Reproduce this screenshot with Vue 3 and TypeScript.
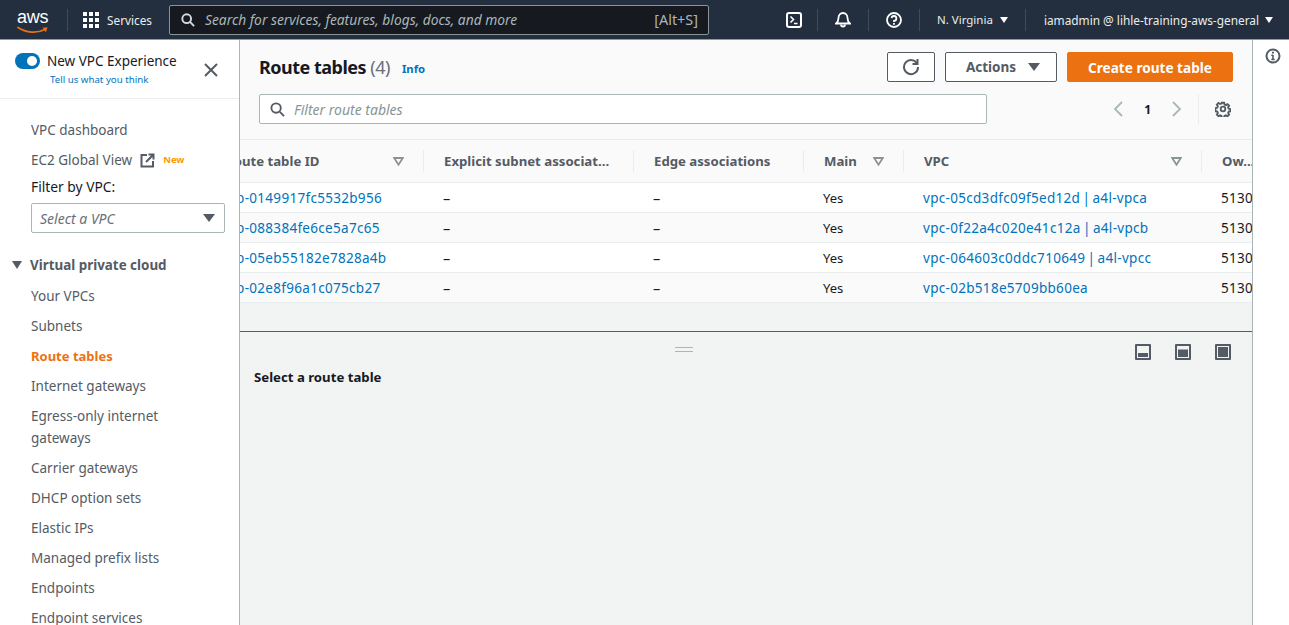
<script setup lang="ts">
const navTop = ['Your VPCs', 'Subnets', 'Route tables', 'Internet gateways', 'Egress-only internet gateways', 'Carrier gateways', 'DHCP option sets', 'Elastic IPs', 'Managed prefix lists', 'Endpoints', 'Endpoint services']
const columns = [
  { label: 'Route table ID', filter: true },
  { label: 'Explicit subnet associat...', filter: false },
  { label: 'Edge associations', filter: false },
  { label: 'Main', filter: true },
  { label: 'VPC', filter: true },
  { label: 'Ow...', filter: false },
]
const rows = [
  { id: 'rtb-0149917fc5532b956', vpc: 'vpc-05cd3dfc09f5ed12d | a4l-vpca' },
  { id: 'rtb-088384fe6ce5a7c65', vpc: 'vpc-0f22a4c020e41c12a | a4l-vpcb' },
  { id: 'rtb-05eb55182e7828a4b', vpc: 'vpc-064603c0ddc710649 | a4l-vpcc' },
  { id: 'rtb-02e8f96a1c075cb27', vpc: 'vpc-02b518e5709bb60ea' },
]
</script>

<template>
  <div class="app">
    <header class="topbar">
      <div class="logo">
        <span class="aws">aws</span>
        <svg class="smile" width="32" height="9" viewBox="0 0 32 9"><path d="M1 1.500C9 7 20 7.500 28 3.500" fill="none" stroke="#ec7211" stroke-width="1.800" stroke-linecap="round"/><path d="M25.500 1.800l5-.6-1.500 5z" fill="#ec7211"/></svg>
      </div>
      <span class="hsep first"></span>
      <svg class="grid-ic" width="16" height="16" viewBox="0 0 16 16" fill="#fff"><rect x="0" y="0" width="4" height="4"/><rect x="6" y="0" width="4" height="4"/><rect x="12" y="0" width="4" height="4"/><rect x="0" y="6" width="4" height="4"/><rect x="6" y="6" width="4" height="4"/><rect x="12" y="6" width="4" height="4"/><rect x="0" y="12" width="4" height="4"/><rect x="6" y="12" width="4" height="4"/><rect x="12" y="12" width="4" height="4"/></svg>
      <span class="services">Services</span>
      <div class="search">
        <svg width="14" height="14" viewBox="0 0 16 16" fill="none" stroke="#d5dbdb" stroke-width="2.200"><circle cx="6.500" cy="6.500" r="5"/><path d="M10.500 10.500L15 15"/></svg>
        <span class="search-text">Search for services, features, blogs, docs, and more</span>
        <span class="search-key">[Alt+S]</span>
      </div>
      <div class="top-right">
        <svg class="tic t1" width="16" height="16" viewBox="0 0 16 16" fill="none" stroke="#fff" stroke-width="2"><rect x="1" y="1" width="14" height="14" rx="2"/><path d="M4.500 4.500L7.500 7.500L4.500 10.500M8 11.500h3.500" stroke-width="1.600"/></svg>
        <span class="hsep"></span>
        <svg class="tic" width="16" height="17" viewBox="0 0 16 17" fill="none" stroke="#fff" stroke-width="1.800"><path d="M1 12.500c1.800-1.400 2.500-2.800 2.500-5.500 0-3 2-5 4.500-5s4.500 2 4.500 5c0 2.700.7 4.100 2.500 5.500z"/><path d="M6 13.500a2 2 0 0 0 4 0"/></svg>
        <span class="hsep"></span>
        <svg class="tic" width="16" height="16" viewBox="0 0 16 16" fill="none" stroke="#fff" stroke-width="1.800"><circle cx="8" cy="8" r="7"/><path d="M5.600 6.200A2.400 2.400 0 1 1 8 8.800v1.200"/><path d="M8 11v1.800"/></svg>
        <span class="hsep"></span>
        <span class="region">N. Virginia</span>
        <span class="caret c-region"></span>
        <span class="hsep"></span>
        <span class="account">iamadmin @ lihle-training-aws-general</span>
        <span class="caret"></span>
      </div>
    </header>

    <div class="body">
      <aside class="side">
        <div class="exp">
          <div class="exp-main">
            <div class="exp-line">
              <span class="toggle"><span class="knob"></span></span>
              <span class="exp-title">New VPC Experience</span>
            </div>
            <a class="exp-link">Tell us what you think</a>
          </div>
          <svg class="close" width="14" height="14" viewBox="0 0 14 14" stroke="#545b64" stroke-width="2"><path d="M1 1l12 12M13 1L1 13"/></svg>
        </div>
        <nav class="nav">
          <div class="item">VPC dashboard</div>
          <div class="item">
            EC2 Global View
            <svg class="ext" width="15" height="15" viewBox="0 0 15 15" fill="none" stroke="#545b64" stroke-width="2"><path d="M7 2H1.500V13.500H13V8"/><path d="M6 9L13 2M8.500 1.500h5v5"/></svg>
            <span class="new">New</span>
          </div>
          <div class="filter-label">Filter by VPC:</div>
          <div class="select">
            <span>Select a VPC</span>
            <span class="select-caret"></span>
          </div>
          <div class="section">
            <span class="sec-caret"></span>
            Virtual private cloud
          </div>
          <div v-for="n in navTop" :key="n" class="item" :class="{ active: n === 'Route tables', wrap: n.length > 25 }">{{ n }}</div>
        </nav>
      </aside>

      <main class="main">
        <section class="top">
          <div class="title-row">
            <h1>Route tables <span class="count">(4)</span></h1>
            <a class="info">Info</a>
            <div class="actions">
              <button class="btn refresh">
                <svg width="18" height="18" viewBox="0 0 18 18" fill="none" stroke="#545b64" stroke-width="2"><path d="M15 5.500A7 7 0 1 0 16 9"/><path d="M15.500 1v5h-5"/></svg>
              </button>
              <button class="btn act">Actions <span class="act-caret"></span></button>
              <button class="btn primary">Create route table</button>
            </div>
          </div>
          <div class="filter-row">
            <div class="filter">
              <svg width="15" height="15" viewBox="0 0 16 16" fill="none" stroke="#545b64" stroke-width="2"><circle cx="6.500" cy="6.500" r="5"/><path d="M10.500 10.500L15 15"/></svg>
              <span>Filter route tables</span>
            </div>
            <div class="pager">
              <svg width="10" height="16" viewBox="0 0 10 16" fill="none" stroke="#aab7b8" stroke-width="1.800"><path d="M9 1L2 8l7 7"/></svg>
              <span class="pnum">1</span>
              <svg width="10" height="16" viewBox="0 0 10 16" fill="none" stroke="#aab7b8" stroke-width="1.800"><path d="M1 1l7 7-7 7"/></svg>
              <span class="psep"></span>
              <svg width="16" height="16" viewBox="0 0 16 16" fill="none" stroke="#545b64" stroke-width="2.100"><path d="M6.700 1h2.600l.4 2 1.500.7 1.800-1.100 1.800 1.800-1.100 1.800.7 1.500 2 .4v2.400l-2 .4-.7 1.500 1.100 1.800-1.800 1.800-1.800-1.100-1.500.7-.4 2H6.700l-.4-2-1.500-.7-1.800 1.100-1.800-1.800 1.100-1.800-.7-1.500-2-.4V6.900l2-.4.7-1.500-1.100-1.800 1.800-1.800 1.800 1.100 1.500-.7z" transform="translate(.8 .8) scale(.9)"/><circle cx="8" cy="8" r="2.300" stroke-width="1.800"/></svg>
            </div>
          </div>
        </section>

        <div class="table-clip">
          <table class="tbl">
            <colgroup>
              <col class="c1" /><col class="c2" /><col class="c3" /><col class="c4" /><col class="c5" /><col class="c6" />
            </colgroup>
            <thead>
              <tr>
                <th v-for="c in columns" :key="c.label">
                  <div class="th-in">
                    <span>{{ c.label }}</span>
                    <svg v-if="c.filter" class="tf" width="11" height="9" viewBox="0 0 11 9" fill="none" stroke="#879596" stroke-width="1.800"><path d="M1.200 1h8.600L5.500 7.700z"/></svg>
                  </div>
                </th>
              </tr>
            </thead>
            <tbody>
              <tr v-for="r in rows" :key="r.id">
                <td class="link">{{ r.id }}</td>
                <td class="dash">–</td>
                <td class="dash">–</td>
                <td>Yes</td>
                <td class="link">{{ r.vpc }}</td>
                <td class="num">513000000000</td>
              </tr>
            </tbody>
          </table>
        </div>

        <section class="lower">
          <div class="handle"></div>
          <div class="split-ics">
            <svg width="16" height="16" viewBox="0 0 16 16"><rect width="16" height="16" rx="1" fill="#545b64"/><rect x="2" y="2" width="12" height="12" fill="#f2f3f3"/><rect x="3" y="9" width="10" height="4" fill="#545b64"/></svg>
            <svg width="16" height="16" viewBox="0 0 16 16"><rect width="16" height="16" rx="1" fill="#545b64"/><rect x="2" y="2" width="12" height="12" fill="#f2f3f3"/><rect x="3" y="5.500" width="10" height="7.500" fill="#545b64"/></svg>
            <svg width="16" height="16" viewBox="0 0 16 16"><rect width="16" height="16" rx="1" fill="#545b64"/><rect x="2" y="2" width="12" height="12" fill="#f2f3f3"/><rect x="3" y="3" width="10" height="10" fill="#545b64"/></svg>
          </div>
          <div class="select-msg">Select a route table</div>
        </section>
      </main>

      <aside class="tools">
        <svg width="16" height="16" viewBox="0 0 16 16" fill="none" stroke="#545b64" stroke-width="2"><circle cx="8" cy="8" r="6.500"/><path d="M8 7v4.500M6.300 7.300H8M6.300 11.500h3.400" stroke-width="1.600"/><path d="M8 3.800v1.800"/></svg>
      </aside>
    </div>
  </div>
</template>

<style>
html, body { margin: 0; overflow: hidden; }
</style>

<style scoped>
.app { width: 1289px; height: 625px; overflow: hidden; display: flex; flex-direction: column; font-family: "Noto Sans", sans-serif; font-size: 13px; color: #16191f; }
.topbar { height: 39px; background: #232f3e; border-bottom: 1px solid #8d9aa8; flex: none; display: flex; align-items: center; padding-left: 17px; color: #fff; box-sizing: content-box; }
.logo { width: 50px; height: 30px; position: relative; flex: none; }
.aws { position: absolute; left: 0; top: 2px; font: 400 18px/20px "Liberation Sans", sans-serif; letter-spacing: -.2px; color: #fff; }
.smile { position: absolute; left: 0; top: 21px; }
.hsep { width: 1px; height: 22px; background: #414b58; flex: none; }
.grid-ic { margin-left: 15px; flex: none; }
.services { margin-left: 8px; font-size: 11.800px; width: 62px; color: #eaeded; flex: none; }
.search { height: 28px; border: 1px solid #879596; border-radius: 2px; background: #16191f; display: flex; align-items: center; padding: 0 10px 0 11px; box-sizing: content-box; width: 517px; color: #aab7b8; flex: none; }
.search svg { flex: none; }
.search-text { margin-left: 10px; font-style: italic; font-size: 13.800px; flex: 1; white-space: nowrap; }
.search-key { font-size: 14.400px; }
.top-right { margin-left: auto; display: flex; align-items: center; padding-right: 16px; }
.top-right .hsep { margin: 0 17px; }
.tic { flex: none; }
.tic.t1 { margin-right: -2px; }
.region, .account { white-space: nowrap; color: #eaeded; }
.region { font-size: 11.500px; }
.account { font-size: 11.850px; margin-left: 1px; }
.caret { width: 0; height: 0; border-left: 4.500px solid transparent; border-right: 4.500px solid transparent; border-top: 6px solid #fff; margin-left: 6px; }
.caret.c-region { margin-left: 7px; }

.body { flex: 1; display: flex; min-height: 0; }
.side { width: 239px; flex: none; background: #fff; border-right: 1px solid #aab7b8; overflow: hidden; box-sizing: content-box; position: relative; z-index: 2; }
.exp { height: 58px; border-bottom: 1px solid #eaeded; padding: 0 21px 0 15px; display: flex; align-items: center; justify-content: space-between; }
.exp-line { display: flex; align-items: center; gap: 7px; }
.toggle { width: 25px; height: 16px; border-radius: 8px; background: #0073bb; position: relative; display: block; }
.knob { position: absolute; right: 3px; top: 3px; width: 10px; height: 10px; background: #fff; border-radius: 50%; }
.exp-title { font-size: 13.500px; line-height: 18px; }
.exp-link { display: block; font-size: 9.700px; line-height: 14px; margin: 3px 0 0 35px; color: #0073bb; }
.close { flex: none; margin-top: 1px; }
.nav { padding: 16px 14px 0 31px; color: #545b64; font-size: 13.500px; }
.item { min-height: 30px; line-height: 30px; white-space: nowrap; display: flex; align-items: center; }
.item.wrap { white-space: normal; line-height: 22px; padding: 4px 0; width: 140px; }
.item.active { color: #ec7211; font-weight: 700; font-size: 13px; }
.ext { margin-left: 8px; }
.new { font-size: 9.500px; font-weight: 700; color: #ff9900; margin-left: 8px; }
.filter-label { color: #16191f; line-height: 20px; margin-top: 2px; font-size: 13.800px; }
.select { margin-top: 6px; height: 28px; border: 1px solid #aab7b8; border-radius: 2px; display: flex; align-items: center; justify-content: space-between; padding: 0 9px 0 8px; font-style: italic; font-size: 14px; color: #687078; width: 175px; box-sizing: content-box; }
.select-caret { width: 0; height: 0; border-left: 6px solid transparent; border-right: 6px solid transparent; border-top: 8px solid #545b64; }
.section { margin: 22px 0 6px -19px; font-weight: 700; display: flex; align-items: center; line-height: 20px; gap: 8px; font-size: 13.400px; }
.sec-caret { width: 0; height: 0; border-left: 5.500px solid transparent; border-right: 5.500px solid transparent; border-top: 8px solid #545b64; }

.main { flex: 1; min-width: 0; background: #f2f3f3; display: flex; flex-direction: column; overflow: hidden; }
.top { background: #fafafa; height: 99px; border-bottom: 1px solid #eaeded; box-sizing: content-box; padding: 0 21px 0 19px; }
.title-row { display: flex; align-items: center; height: 30px; padding-top: 12px; }
h1 { margin: 0; font-size: 18px; font-weight: 700; line-height: 30px; color: #16191f; letter-spacing: -.5px; }
.count { font-weight: 400; color: #687078; }
.info { margin-left: 12px; font-size: 11.300px; font-weight: 700; color: #0073bb; padding-top: 3px; }
.actions { margin-left: auto; display: flex; gap: 10px; margin-right: -2px; }
.btn { height: 30px; box-sizing: border-box; border-radius: 2px; font: 700 13.500px "Noto Sans", sans-serif; border: 1px solid #545b64; background: #fff; color: #545b64; display: flex; align-items: center; justify-content: center; padding: 0; }
.refresh { width: 48px; }
.act { width: 112px; gap: 12px; padding-left: 4px; }
.act-caret { width: 0; height: 0; border-left: 6.500px solid transparent; border-right: 6.500px solid transparent; border-top: 8px solid #545b64; }
.primary { width: 166px; background: #ec7211; border-color: #ec7211; color: #fff; font-size: 13.600px; }
.filter-row { display: flex; align-items: center; margin-top: 12px; }
.filter { width: 716px; height: 28px; border: 1px solid #aab7b8; border-radius: 2px; background: #fff; display: flex; align-items: center; padding-left: 10px; gap: 9px; font-style: italic; color: #879596; box-sizing: content-box; font-size: 14px; }
.pager { margin-left: auto; display: flex; align-items: center; }
.pnum { font-weight: 700; font-size: 12px; margin: 0 21px; }
.psep { width: 1px; height: 30px; background: #eaeded; margin: 0 16px; }

.table-clip { overflow: hidden; flex: none; }
.tbl { border-collapse: collapse; table-layout: fixed; width: 1057px; margin-left: -35px; }
.c1 { width: 219px; }
.c2 { width: 210px; }
.c3 { width: 170px; }
.c4 { width: 100px; }
.c5 { width: 298px; }
.c6 { width: 60px; }
th { height: 42px; background: #fafafa; border-bottom: 1px solid #eaeded; padding: 0; font-weight: 700; text-align: left; color: #545b64; font-size: 13.200px; }
.th-in { height: 22px; border-right: 1px solid #eaeded; padding: 0 19px 0 20px; display: flex; align-items: center; justify-content: space-between; white-space: nowrap; overflow: hidden; }
th:last-child .th-in { border-right: 0; }
td { height: 29px; padding: 0 0 0 19px; border-bottom: 1px solid #eaeded; white-space: nowrap; overflow: hidden; background: #fff; }
tbody tr:nth-child(even) td { background: #fafafa; }
.link { color: #0073bb; font-size: 13.500px; letter-spacing: .3px; word-spacing: -1.500px; }
.num { font-size: 13.500px; letter-spacing: .3px; }
.dash { font-size: 14.500px; }
td.link:first-child { padding-left: 20px; }
.lower { margin-top: 28px; flex: 1; border-top: 1px solid #545b64; position: relative; padding: 35px 14px 0; }
.handle { position: absolute; left: 435px; top: 15px; width: 18px; height: 5px; border-top: 1px solid #aab7b8; border-bottom: 1px solid #aab7b8; box-sizing: border-box; }
.split-ics { position: absolute; top: 12px; right: 21px; display: flex; gap: 24px; }
.select-msg { font-weight: 700; line-height: 20px; font-size: 13.200px; }
.tools { width: 36px; flex: none; background: #fff; border-left: 1px solid #aab7b8; box-sizing: content-box; padding-top: 8px; text-align: center; }
.tools svg { margin-left: 3px; }
</style>
